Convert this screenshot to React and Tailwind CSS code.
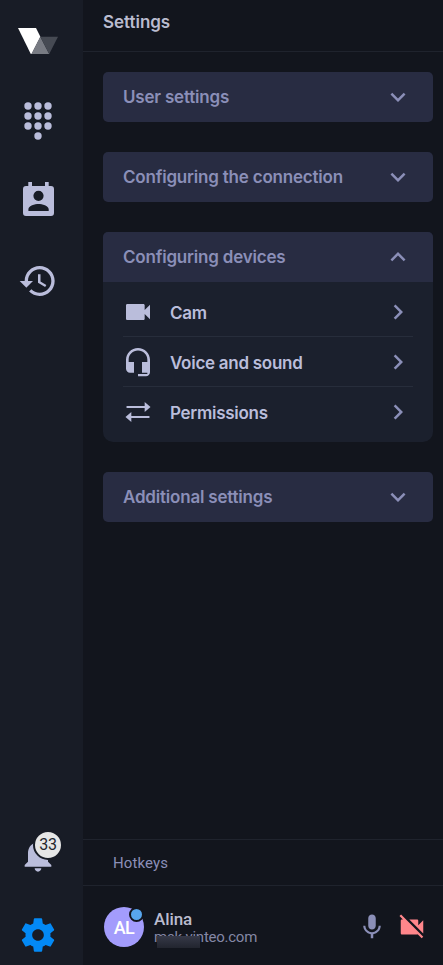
import React from 'react';

const ICONS = {
  history:
    'M13 3c-4.97 0-9 4.03-9 9H1l3.89 3.89.07.14L9 12H6c0-3.87 3.13-7 7-7s7 3.13 7 7-3.13 7-7 7c-1.93 0-3.68-.79-4.94-2.06l-1.42 1.42C8.27 19.99 10.51 21 13 21c4.97 0 9-4.03 9-9s-4.03-9-9-9zm-1 5v5l4.28 2.54.72-1.21-3.5-2.08V8H12z',
  bell: 'M12 22c1.1 0 2-.9 2-2h-4c0 1.1.89 2 2 2zm6-6v-5c0-3.07-1.64-5.64-4.5-6.32V4c0-.83-.67-1.5-1.5-1.5s-1.5.67-1.5 1.5v.68C7.63 5.36 6 7.92 6 11v5l-2 2v1h16v-1l-2-2z',
  gear: 'M19.43 12.98c.04-.32.07-.64.07-.98s-.03-.66-.07-.98l2.11-1.65c.19-.15.24-.42.12-.64l-2-3.46c-.12-.22-.39-.3-.61-.22l-2.49 1c-.52-.4-1.08-.73-1.69-.98l-.38-2.65C14.46 2.18 14.25 2 14 2h-4c-.25 0-.46.18-.49.42l-.38 2.65c-.61.25-1.17.59-1.69.98l-2.49-1c-.23-.09-.49 0-.61.22l-2 3.46c-.13.22-.07.49.12.64l2.11 1.65c-.04.32-.07.65-.07.98s.03.66.07.98l-2.11 1.65c-.19.15-.24.42-.12.64l2 3.46c.12.22.39.3.61.22l2.49-1c.52.4 1.08.73 1.69.98l.38 2.65c.03.24.24.42.49.42h4c.25 0 .46-.18.49-.42l.38-2.65c.61-.25 1.17-.59 1.69-.98l2.49 1c.23.09.49 0 .61-.22l2-3.46c.12-.22.07-.49-.12-.64l-2.11-1.65zM12 15.5c-1.93 0-3.5-1.57-3.5-3.5s1.57-3.5 3.5-3.5 3.5 1.57 3.5 3.5-1.57 3.5-3.5 3.5z',
  cam: 'M17 10.5V7c0-.55-.45-1-1-1H4c-.55 0-1 .45-1 1v10c0 .55.45 1 1 1h12c.55 0 1-.45 1-1v-3.5l4 4v-11l-4 4z',
  headset:
    'M12 1.5c-4.97 0-9 4.03-9 8.8v6.7c0 1.66 1.34 3 3 3h3v-8H5v-1.8c0-3.8 3.13-6.8 7-6.8s7 3 7 6.8v1.8h-4v8h4v1h-7v1.7h6c1.66 0 3-1.34 3-3V10.3c0-4.77-4.03-8.8-9-8.8z',
  swap: 'M3.4 7.5H17V4.5l4.4 3.75L17 12V9H3.4zM20.6 16.5H7v3l-4.4-3.75L7 12V15H20.6z',
  down: 'M7.41 8.59 12 13.17l4.59-4.58L18 10l-6 6-6-6z',
  up: 'M7.41 15.41 12 10.83l4.59 4.58L18 14l-6-6-6 6z',
  right: 'M8.59 16.59 13.17 12 8.59 7.41 10 6l6 6-6 6z',
  mic: 'M12 14c1.66 0 2.99-1.34 2.99-3L15 5c0-1.66-1.34-3-3-3S9 3.34 9 5v6c0 1.66 1.34 3 3 3zm5.3-3c0 3-2.54 5.1-5.3 5.1S6.7 14 6.7 11H5c0 3.41 2.72 6.23 6 6.72V21h2v-3.28c3.28-.48 6-3.3 6-6.72h-1.7z',
  camOff:
    'M21 6.5l-4 4V7c0-.55-.45-1-1-1H9.82L21 17.18V6.5zM3.27 2L2 3.27 4.73 6H4c-.55 0-1 .45-1 1v10c0 .55.45 1 1 1h12c.21 0 .39-.08.54-.18L19.73 21 21 19.73 3.27 2z',
};

function Icon({ name, className }) {
  return (
    <svg viewBox="0 0 24 24" fill="currentColor" className={`block shrink-0 ${className}`}>
      <path d={ICONS[name]} />
    </svg>
  );
}

function Logo() {
  return (
    <svg viewBox="0 0 40 26" className="ml-[18px] block h-[26px] w-[40px]">
      <path d="M0 0H18L22.4 8.8L13.6 26H12.8Z" fill="#fff" />
      <path d="M22.3 8.8L31.2 26H13.4Z" fill="#787b83" />
      <path d="M22.3 8.8H40L31.2 26Z" fill="#464a53" />
    </svg>
  );
}

function Dialpad() {
  const dots = [[5, 5], [15, 5], [25, 5], [5, 15], [15, 15], [25, 15], [5, 25], [15, 25], [25, 25], [15, 35]];
  return (
    <svg viewBox="0 0 30 40" fill="currentColor" className="ml-[23px] mt-[47px] block h-[40px] w-[30px]">
      {dots.map(([x, y]) => (
        <circle key={`${x}-${y}`} cx={x} cy={y} r="3.7" />
      ))}
    </svg>
  );
}

function ContactCalendar() {
  return (
    <svg viewBox="0 0 31 34" fill="currentColor" className="ml-[22.5px] mt-[41px] block h-[34px] w-[31px]">
      <path
        fillRule="evenodd"
        d="M5.3 0H9V4H22V0H25.7V4H28A3 3 0 0 1 31 7V31A3 3 0 0 1 28 34H3A3 3 0 0 1 0 31V7A3 3 0 0 1 3 4H5.3ZM15.5 8.7a5 5 0 1 0 0 10.2a5 5 0 1 0 0-10.2ZM5.4 28.9H25.7V27.2C25.7 24 19 22.1 15.5 22.1S5.4 24 5.4 27.2Z"
      />
    </svg>
  );
}

function Sidebar() {
  return (
    <aside className="flex w-[83px] shrink-0 flex-col bg-[#181c26] pt-[28px] text-[#babddb]">
      <Logo />
      <Dialpad />
      <ContactCalendar />
      <Icon name="history" className="ml-[18.3px] mt-[45px] size-[40px]" />
      <div className="relative ml-[18px] mt-auto">
        <Icon name="bell" className="size-[40px]" />
        <span className="absolute left-[15px] top-[-5px] flex size-[30px] items-center justify-center rounded-full border-2 border-[#181c26] bg-[#e6e6e6] font-[Roboto] text-[16px] leading-none tracking-[-0.2px] text-[#22252d]">
          33
        </span>
      </div>
      <Icon name="gear" className="mb-[10px] ml-[18px] mt-[40px] size-[40px] text-[#0389f5]" />
    </aside>
  );
}

function Header({ title, open }) {
  return (
    <div className="flex h-[50px] items-center justify-between bg-[#282c42] pl-[20px] pr-[20px] text-[#8b8fb8]">
      <span className="pt-[2px] text-[17px] font-semibold tracking-[-0.2px]">{title}</span>
      <Icon name={open ? 'up' : 'down'} className="size-[30px]" />
    </div>
  );
}

function Section({ title }) {
  return (
    <section className="overflow-hidden rounded-[5px]">
      <Header title={title} />
    </section>
  );
}

function Item({ icon, label, last }) {
  return (
    <div className={`flex h-[50px] items-center ${last ? '' : 'border-b border-[#272d3b] pt-px'}`}>
      <Icon name={icon} className="-ml-px size-[32px] text-[#babddb]" />
      <span className="ml-[16px] flex-1 pt-[4px] text-[17px] font-semibold tracking-[-0.27px] text-[#babddb]">{label}</span>
      <Icon name="right" className="size-[30px] text-[#8b8fb8]" />
    </div>
  );
}

export default function App() {
  return (
    <div className="flex h-[965px] w-[443px] overflow-hidden bg-[#12151d] font-[Inter,sans-serif]">
      <Sidebar />
      <main className="flex min-w-0 flex-1 flex-col">
        <h1 className="h-[52px] border-b border-[#1f232d] pl-[20px] pt-[9px] text-[17px] font-semibold leading-[26px] tracking-[-0.03px] text-[#babccf]">
          Settings
        </h1>
        <div className="flex flex-1 flex-col gap-[30px] pl-[20px] pr-[10px] pt-[20px]">
          <Section title="User settings" />
          <Section title="Configuring the connection" />
          <section className="overflow-hidden rounded-b-[10px] rounded-t-[5px] bg-[#1b202d]">
            <Header title="Configuring devices" open />
            <div className="px-[20px] pb-[5px] pt-[5px]">
              <Item icon="cam" label="Cam" />
              <Item icon="headset" label="Voice and sound" />
              <Item icon="swap" label="Permissions" last />
            </div>
          </section>
          <Section title="Additional settings" />
        </div>
        <div className="flex h-[47px] items-center border-y border-[#1f232d] pl-[30px] pt-[2px] font-[Roboto] text-[15px] tracking-[0.1px] text-[#8b8fb8]">
          Hotkeys
        </div>
        <footer className="flex h-[79px] items-start pl-[21px] pt-[21px]">
          <div className="relative flex size-[40px] items-center justify-center rounded-full bg-[#a39cfc] font-[Roboto] text-[18px] font-medium tracking-[-0.5px] text-white">
            AL
            <span className="absolute right-0 top-0 size-[15px] rounded-full border-2 border-[#12151d] bg-[#58a6ee]" />
          </div>
          <div className="ml-[10px] flex flex-col font-[Roboto]">
            <span className="text-[17px] font-medium leading-[24px] tracking-[-0.1px] text-[#babccf]">Alina</span>
            <span className="relative -mt-px text-[15px] leading-[14px] tracking-[-0.25px] text-[#8487a5]">
              msk.vinteo.com
              <span className="absolute left-[3px] top-[6px] h-[12px] w-[43px] bg-gradient-to-b from-[#363948] to-[#22252f]" />
            </span>
          </div>
          <Icon name="mic" className="ml-auto mt-[4.5px] size-[30px] text-[#8b8fb8]" />
          <Icon name="camOff" className="ml-[10px] mr-[16px] mt-[5px] size-[30px] text-[#ff868b]" />
        </footer>
      </main>
    </div>
  );
}
